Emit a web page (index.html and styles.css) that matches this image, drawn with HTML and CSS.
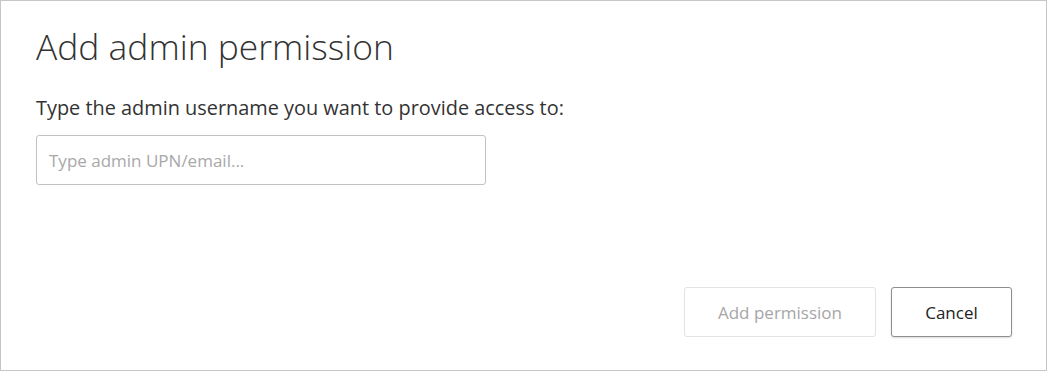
FILE: index.html
```html
<!DOCTYPE html>
<html>
<head>
<meta charset="utf-8">
<link rel="stylesheet" href="styles.css">
</head>
<body>
<div class="dialog">
  <h1 class="title">Add admin permission</h1>
  <p class="label">Type the admin username you want to provide access to:</p>
  <input class="field" type="text" placeholder="Type admin UPN/email...">
  <div class="actions">
    <button class="btn btn-disabled" disabled>Add permission</button>
    <button class="btn btn-default">Cancel</button>
  </div>
</div>
</body>
</html>
```
FILE: styles.css
```css
* { box-sizing: border-box; }
html, body { margin: 0; padding: 0; background: #fff; }
body {
  font-family: "Open Sans", "Noto Sans", "Liberation Sans", sans-serif;
  color: #333;
}
.dialog {
  width: 1047px;
  height: 371px;
  border: 1px solid #c6c6c6;
  padding: 22px 34px 0 35px;
  display: flex;
  flex-direction: column;
}
.title {
  margin: 0;
  font-size: 35.4px;
  font-weight: 300;
  line-height: 46px;
  color: #333;
}
.label {
  margin: 26px 0 0 0;
  font-size: 19.9px;
  line-height: 26px;
  color: #333;
}
.field {
  margin-top: 14px;
  width: 450px;
  height: 50px;
  border: 1px solid #c2c2c2;
  border-radius: 3px;
  padding: 0 12px;
  font-family: inherit;
  font-size: 17px;
  color: #333;
  outline: none;
}
.field::placeholder { color: #a8a8a8; }
.actions {
  margin-top: 102px;
  display: flex;
  justify-content: flex-end;
  gap: 15px;
}
.btn {
  height: 50px;
  font-family: inherit;
  font-size: 17px;
  border-radius: 3px;
  background: #fff;
}
.btn-disabled {
  width: 192px;
  border: 1px solid #e3e3e3;
  color: #a6a6a6;
}
.btn-default {
  width: 121px;
  border: 1px solid #8f8f8f;
  color: #222;
  box-shadow: 0 1px 2px rgba(0,0,0,0.15);
}
```
